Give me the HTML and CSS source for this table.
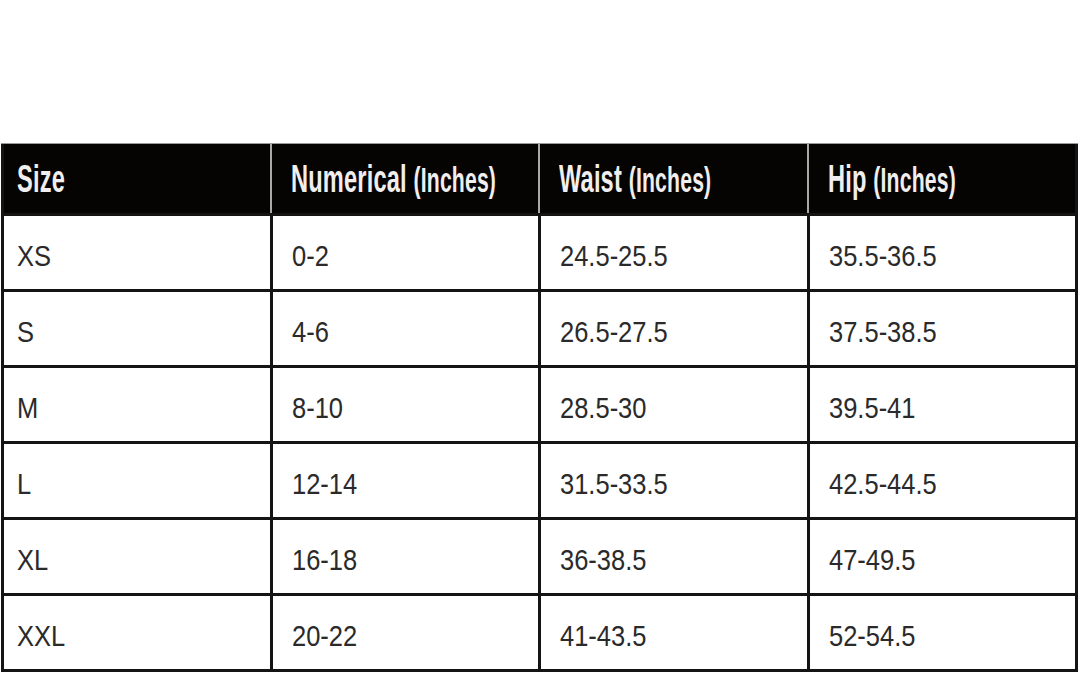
FILE: index.html
```html
<!DOCTYPE html>
<html>
<head>
<meta charset="utf-8">
<link rel="stylesheet" href="styles.css">
</head>
<body>
<div class="page">
  <div class="chart">
    <div class="hc first"><span class="ht">Size</span></div>
    <div class="hc"><span class="ht">Numerical <small>(Inches)</small></span></div>
    <div class="hc"><span class="ht">Waist <small>(Inches)</small></span></div>
    <div class="hc"><span class="ht">Hip <small>(Inches)</small></span></div>

    <div class="c first"><span class="t">XS</span></div><div class="c"><span class="t">0-2</span></div><div class="c"><span class="t">24.5-25.5</span></div><div class="c"><span class="t">35.5-36.5</span></div>
    <div class="c first"><span class="t">S</span></div><div class="c"><span class="t">4-6</span></div><div class="c"><span class="t">26.5-27.5</span></div><div class="c"><span class="t">37.5-38.5</span></div>
    <div class="c first"><span class="t">M</span></div><div class="c"><span class="t">8-10</span></div><div class="c"><span class="t">28.5-30</span></div><div class="c"><span class="t">39.5-41</span></div>
    <div class="c first"><span class="t">L</span></div><div class="c"><span class="t">12-14</span></div><div class="c"><span class="t">31.5-33.5</span></div><div class="c"><span class="t">42.5-44.5</span></div>
    <div class="c first"><span class="t">XL</span></div><div class="c"><span class="t">16-18</span></div><div class="c"><span class="t">36-38.5</span></div><div class="c"><span class="t">47-49.5</span></div>
    <div class="c first"><span class="t">XXL</span></div><div class="c"><span class="t">20-22</span></div><div class="c"><span class="t">41-43.5</span></div><div class="c"><span class="t">52-54.5</span></div>
  </div>
</div>
</body>
</html>
```

FILE: styles.css
```css
html, body {
  margin: 0;
  padding: 0;
  background: #fff;
}

.page {
  width: 1080px;
  height: 674px;
  padding-top: 143px;
  padding-left: 1px;
  box-sizing: border-box;
  overflow: hidden;
}

.chart {
  width: 1077px;
  display: grid;
  grid-template-columns: repeat(4, 1fr);
  grid-template-rows: 69px repeat(6, 73px);
  gap: 3px;
  padding: 0 3px 3px 3px;
  background: #141414;
  border-top: 1px solid #9a9a9a;
  box-sizing: border-box;
}

.hc {
  background: #060303;
  display: flex;
  align-items: center;
  padding-left: 19px;
  padding-top: 1px;
  border-left: 2px solid #a9a9a9;
  margin-left: -3px;
  overflow: hidden;
  white-space: nowrap;
}

.hc.first {
  border-left: none;
  margin-left: 0;
  padding-left: 13px;
}

.ht {
  display: inline-block;
  font-family: "Liberation Sans", Arial, sans-serif;
  font-weight: bold;
  font-size: 39px;
  color: #f0eeee;
  transform: scaleX(0.605);
  transform-origin: left center;
  letter-spacing: 0.3px;
}

.ht small {
  font-size: 35px;
}

.c {
  background: #fff;
  display: flex;
  align-items: center;
  padding-left: 19px;
  padding-top: 6px;
  white-space: nowrap;
}

.c.first {
  padding-left: 13px;
}

.t {
  display: inline-block;
  font-family: "Liberation Sans", Arial, sans-serif;
  font-size: 30px;
  color: #2a2a2a;
  transform: scaleX(0.85);
  transform-origin: left center;
}
```
